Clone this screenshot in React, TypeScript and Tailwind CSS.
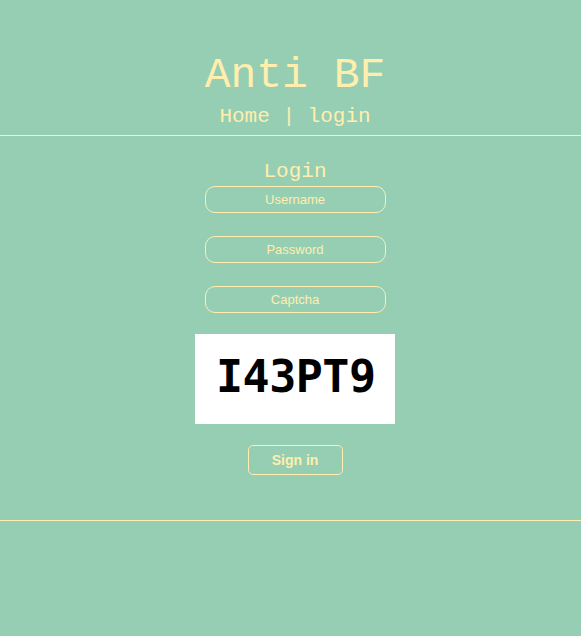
import React from 'react'

const mono = { fontFamily: '"Liberation Mono", "DejaVu Sans Mono", monospace' }

function Field({ placeholder, type = 'text' }: { placeholder: string; type?: string }) {
  return (
    <input
      type={type}
      placeholder={placeholder}
      className="w-[181px] h-[27px] rounded-[10px] border border-[#ffeead] bg-transparent text-center text-[13px] text-[#ffeead] placeholder:text-[#ffeead] outline-none font-['Liberation_Sans',Arial,sans-serif]"
    />
  )
}

export default function App() {
  return (
    <div className="min-h-[636px] w-full bg-[#96ceb4] text-[#ffeead]">
      <header className="flex flex-col items-center pt-[54px] pl-[9px]">
        <h1 style={mono} className="text-[43px] leading-[43px]">Anti BF</h1>
        <nav style={mono} className="mt-[9px] text-[21px] leading-[21px]">
          <a href="#">Home</a> | <a href="#">login</a>
        </nav>
      </header>
      <hr className="mt-[8px] border-0 border-t border-[#ffeead]" />
      <main className="flex flex-col items-center pl-[9px]">
        <h2 style={mono} className="mt-[25px] text-[21px] leading-[21px]">Login</h2>
        <form className="mt-[4px] flex flex-col items-center">
          <div className="flex flex-col gap-[23px]">
            <Field placeholder="Username" />
            <Field placeholder="Password" type="password" />
            <Field placeholder="Captcha" />
          </div>
          <div className="mt-[21px] flex h-[90px] w-[200px] items-start bg-white pl-[21px] pt-[20px]">
            <span className="text-[45px] font-bold leading-none tracking-[-0.5px] text-black font-['DejaVu_Sans_Mono',monospace]">I43PT9</span>
          </div>
          <button
            type="button"
            className="mt-[21px] h-[30px] w-[95px] rounded-[5px] border border-[#ffeead] bg-transparent text-[14px] font-bold text-[#ffeead] font-['Liberation_Sans',Arial,sans-serif]"
          >
            Sign in
          </button>
        </form>
      </main>
      <hr className="mt-[45px] border-0 border-t border-[#ffeead]" />
    </div>
  )
}
